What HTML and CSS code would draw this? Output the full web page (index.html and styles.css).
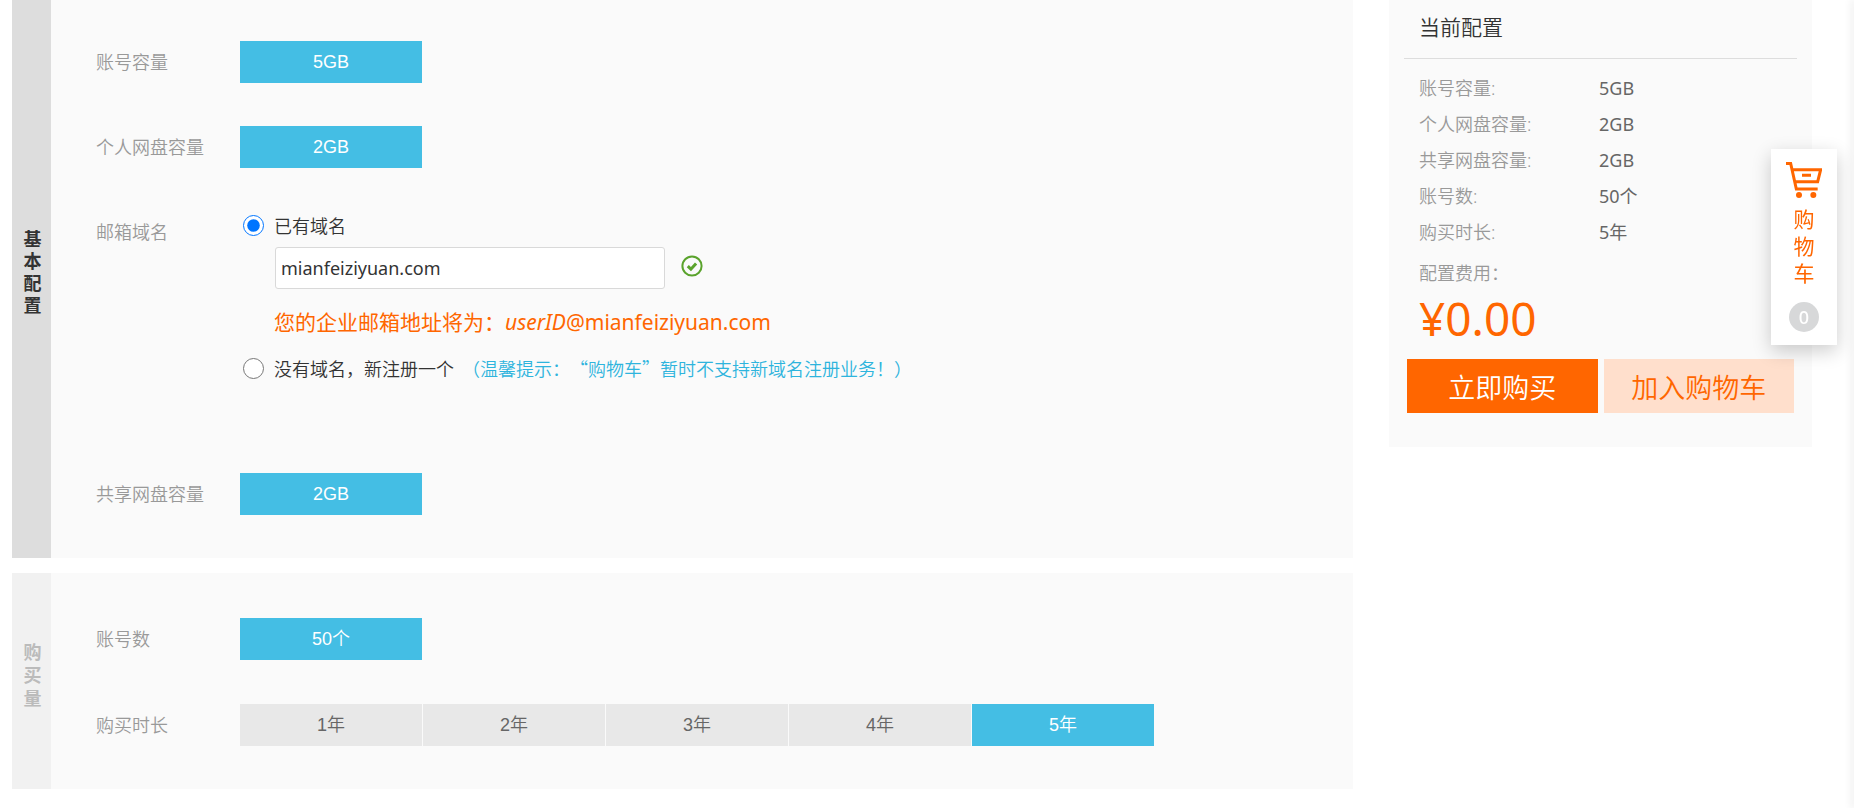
FILE: index.html
```html
<!DOCTYPE html>
<html lang="zh-CN">
<head>
    <meta charset="utf-8" />
    <title>企业邮箱</title>
    <link rel="stylesheet" href="styles.css">
</head>
<body>
    <div id="wrap">
        <form id="main">
            <div class="section">
                <h2 class="section-title"><span>基本配置</span></h2>
                <div class="section-body">
                    <div class="row">
                        <span class="label">账号容量</span>
                        <div class="options">
                            <button type="button" class="option active">5GB</button>
                        </div>
                    </div>
                    <div class="row">
                        <span class="label">个人网盘容量</span>
                        <div class="options">
                            <button type="button" class="option active">2GB</button>
                        </div>
                    </div>
                    <div class="row row-domain">
                        <span class="label">邮箱域名</span>
                        <div class="domain">
                            <div class="radio-line">
                                <input type="radio" name="domain" id="domain_own" checked />
                                <label for="domain_own">已有域名</label>
                            </div>
                            <div class="domain-input">
                                <input type="text" id="domain_name" aria-label="域名" value="mianfeiziyuan.com" />
                                <svg class="icon-ok" viewBox="0 0 22 22">
                                    <circle cx="11" cy="11" r="9.6" />
                                    <path d="M6.8 11.2l3.1 3 5.2-5.8" />
                                </svg>
                            </div>
                            <p class="address">您的企业邮箱地址将为：<em>userID</em>@mianfeiziyuan.com</p>
                            <div class="radio-line">
                                <input type="radio" name="domain" id="domain_new" />
                                <label for="domain_new">没有域名，新注册一个</label>
                                <span class="tip">（温馨提示：“购物车”暂时不支持新域名注册业务！）</span>
                            </div>
                        </div>
                    </div>
                    <div class="row">
                        <span class="label">共享网盘容量</span>
                        <div class="options">
                            <button type="button" class="option active">2GB</button>
                        </div>
                    </div>
                </div>
            </div>

            <div class="section section-amount">
                <h2 class="section-title"><span>购买量</span></h2>
                <div class="section-body">
                    <div class="row">
                        <span class="label">账号数</span>
                        <div class="options">
                            <button type="button" class="option active">50个</button>
                        </div>
                    </div>
                    <div class="row">
                        <span class="label">购买时长</span>
                        <div class="options">
                            <button type="button" class="option">1年</button>
                            <button type="button" class="option">2年</button>
                            <button type="button" class="option">3年</button>
                            <button type="button" class="option">4年</button>
                            <button type="button" class="option active">5年</button>
                        </div>
                    </div>
                </div>
            </div>
        </form>

        <div id="aside">
            <h3>当前配置</h3>
            <dl>
                <dt>账号容量:</dt><dd>5GB</dd>
                <dt>个人网盘容量:</dt><dd>2GB</dd>
                <dt>共享网盘容量:</dt><dd>2GB</dd>
                <dt>账号数:</dt><dd>50个</dd>
                <dt>购买时长:</dt><dd>5年</dd>
            </dl>
            <p class="fee">配置费用：</p>
            <p class="price">¥0.00</p>
            <div class="actions">
                <button type="button" class="buy">立即购买</button>
                <button type="button" class="add">加入购物车</button>
            </div>
        </div>
    </div>

    <a href="#" id="cart">
        <svg class="icon-cart" viewBox="0 0 108 108">
            <path d="M0 4.500h14L31 81h64M20 23h84l-9 36H27M48 40h27" />
            <circle cx="39" cy="99" r="9" />
            <circle cx="82" cy="99" r="9" />
        </svg>
        <span class="cart-text">购物车</span>
        <span class="cart-count">0</span>
    </a>
    <div id="edge"></div>
</body>
</html>
```

FILE: styles.css
```css
* { margin: 0; border: 0; padding: 0; box-sizing: border-box; }

body {
    background: #ffffff;
    color: #333;
    font-family: "Noto Sans", "Noto Sans CJK SC", sans-serif;
    font-size: 18px;
    font-weight: 350;
    line-height: 28px;
    text-spacing-trim: space-all;
}

button, input {
    font: inherit;
    color: inherit;
}

button { cursor: pointer; }

#wrap {
    display: flex;
    align-items: flex-start;
    gap: 36px;
    padding: 0 42px 18px 12px;
}

#main {
    flex: 1;
    display: flex;
    flex-direction: column;
    gap: 15px;
}

.section {
    display: flex;
    background: #fafafa;
}

.section-title {
    width: 39px;
    padding: 0 0 14px 2px;
    display: flex;
    align-items: center;
    justify-content: center;
    background: #ddd;
    font-size: 18px;
    font-weight: bold;
    line-height: 22px;
}

.section-title span { width: 18px; }

.section-body {
    flex: 1;
    display: flex;
    flex-direction: column;
    gap: 43px;
    padding: 41px 0 43px 45px;
}

.section-amount .section-title {
    padding-bottom: 12px;
    background: #f1f1f1;
    color: #bbb;
    line-height: 23px;
}

.section-amount .section-body {
    gap: 44px;
    padding-top: 45px;
}

.row {
    display: flex;
}

.row .label {
    width: 144px;
    line-height: 42px;
    color: #999;
}

.options {
    display: flex;
    gap: 1px;
}

.option {
    width: 182px;
    height: 42px;
    background: #e8e8e8;
    color: #666;
    font-family: "Liberation Sans", "Noto Sans CJK SC", sans-serif;
}

.option.active {
    background: #44bee4;
    color: #ffffff;
}

.row-domain { min-height: 219px; }

.domain { padding-left: 3px; }

.radio-line {
    display: flex;
    align-items: center;
    font-family: "Noto Sans CJK SC", sans-serif;
}

.radio-line input {
    width: 21px;
    height: 21px;
    margin-right: 10px;
    accent-color: #0075ff;
}

.radio-line .tip {
    margin-left: 8px;
    color: #2eb4dd;
}

.domain-input {
    display: flex;
    align-items: center;
    gap: 16px;
    margin: 8px 0 19px 32px;
}

.domain-input input {
    width: 390px;
    height: 42px;
    padding: 0 5px;
    border: 1px solid #d9d9d9;
    border-radius: 3px;
    background: #ffffff;
    font-weight: normal;
}

.icon-ok {
    width: 22px;
    height: 22px;
    margin-bottom: 4px;
    fill: none;
    stroke: #5aa32c;
    stroke-width: 2;
}

.icon-ok path { stroke-width: 3; }

.address {
    margin: 0 0 18px 31px;
    font-size: 21px;
    font-weight: normal;
    color: #ff6600;
}

#aside {
    width: 423px;
    padding: 0 15px 34px;
    background: #fafafa;
}

#aside h3 {
    padding: 13px 15px 17px;
    border-bottom: 1px solid #ddd;
    font-size: 21px;
    font-weight: 350;
}

#aside dl {
    display: grid;
    grid-template-columns: 180px 1fr;
    padding: 11px 15px 0;
    line-height: 36px;
}

#aside dt { color: #999; }

#aside dd {
    color: #666;
    font-weight: normal;
}

#aside .fee {
    padding: 9px 15px 0;
    color: #999;
}

#aside .price {
    padding: 0 15px;
    font-size: 46px;
    font-weight: normal;
    line-height: 62px;
    color: #ff6600;
}

.actions {
    display: flex;
    gap: 6px;
    padding: 10px 3px 0;
}

.actions button {
    flex: 1;
    height: 54px;
    padding-top: 3px;
    font-size: 27px;
}

.actions .buy {
    background: #ff6600;
    color: #ffffff;
}

.actions .add {
    background: #ffdfcc;
    color: #ff6600;
}

/* floating cart */
#cart {
    position: fixed;
    top: 149px;
    right: 17px;
    width: 66px;
    padding: 13px 0;
    display: flex;
    flex-direction: column;
    align-items: center;
    background: #ffffff;
    box-shadow: 0 6px 18px rgba(0, 0, 0, 0.2);
    color: #ff6600;
    text-decoration: none;
}

.icon-cart {
    width: 36px;
    height: 36px;
    fill: #ff6600;
}

.icon-cart path {
    fill: none;
    stroke: #ff6600;
    stroke-width: 9;
}

.cart-text {
    width: 21px;
    margin: 8px 0 15px;
    font-size: 21px;
    font-weight: normal;
    line-height: 27px;
}

.cart-count {
    width: 30px;
    height: 30px;
    border-radius: 50%;
    background: #d7d8d9;
    color: #ffffff;
    font-weight: 500;
    line-height: 30px;
    text-align: center;
}

#edge {
    position: fixed;
    top: 0;
    bottom: 0;
    right: 0;
    width: 0;
    box-shadow: 0 0 8px 1px rgba(0, 0, 0, 0.2);
}
```
